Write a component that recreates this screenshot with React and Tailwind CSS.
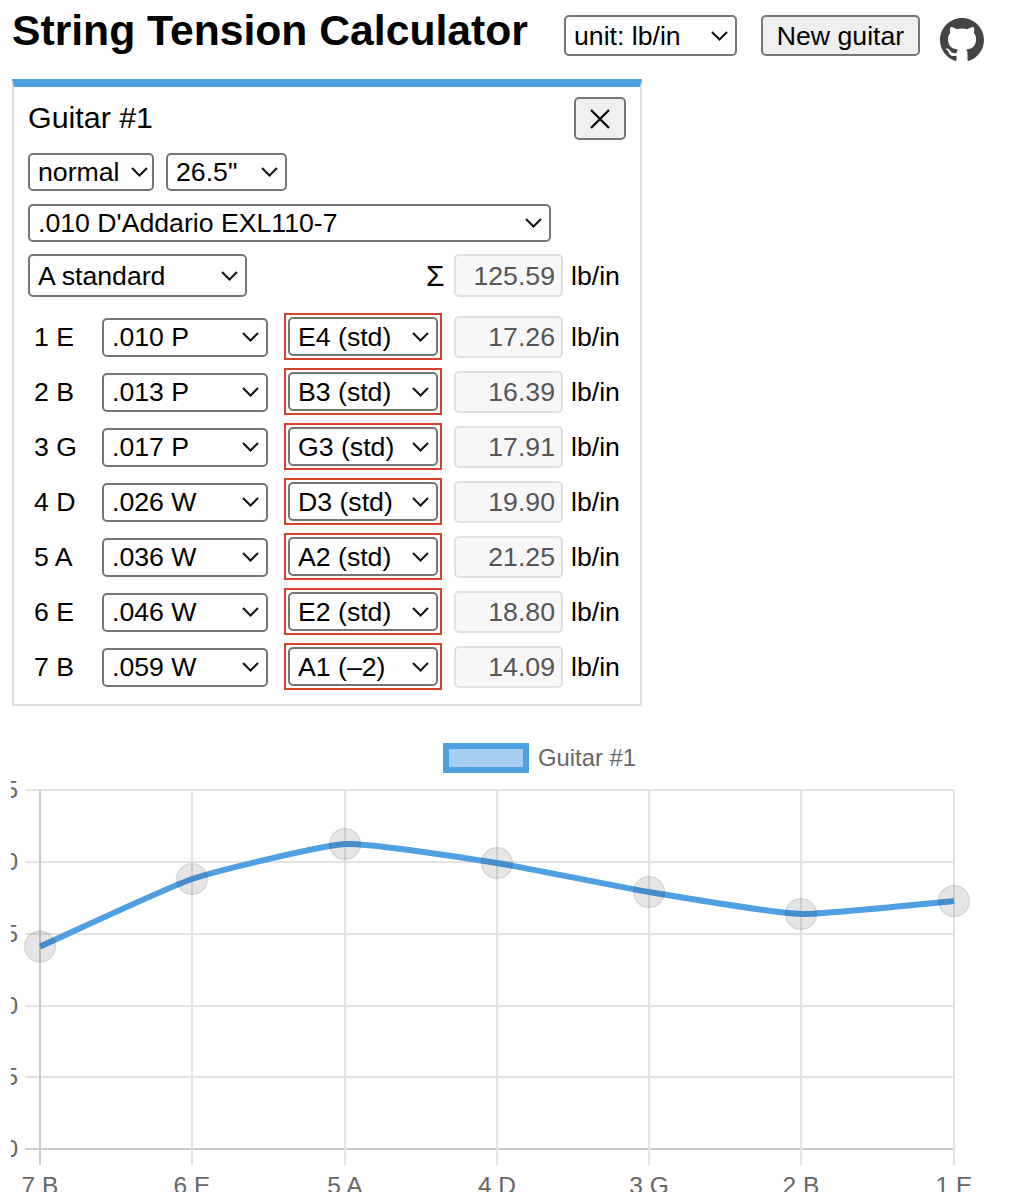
import React from "react";

const font = { fontFamily: '"Liberation Sans", Arial, sans-serif' };

function Select({ value, className, chevron = "right-[9px]", shift = false }) {
  return (
    <div className={`relative ${className}`}>
      <select
        defaultValue={value}
        className={`w-full h-full appearance-none bg-white border-2 border-[#767676] rounded-[5px] pl-[8px] pr-8 text-[26.67px] leading-none text-black outline-none ${shift ? "pt-[2px]" : ""}`}
      >
        <option>{value}</option>
      </select>
      <svg className={`absolute top-1/2 -translate-y-1/2 pointer-events-none ${chevron}`} width="17" height="10" viewBox="0 0 17 10" fill="none" stroke="#111" strokeWidth="2">
        <path d="M1 1l7.5 7.5L16 1" />
      </svg>
    </div>
  );
}

function Output({ value, className = "h-[42px]" }) {
  return (
    <div className={`w-[109px] ${className} border-2 border-[#e0e0e0] rounded-[5px] bg-[#f7f7f7] text-[#555555] text-[26.67px] flex items-center justify-end pr-[6px]`}>
      {value}
    </div>
  );
}

const rows = [
  ["1 E", ".010 P", "E4 (std)", "17.26"],
  ["2 B", ".013 P", "B3 (std)", "16.39"],
  ["3 G", ".017 P", "G3 (std)", "17.91"],
  ["4 D", ".026 W", "D3 (std)", "19.90"],
  ["5 A", ".036 W", "A2 (std)", "21.25"],
  ["6 E", ".046 W", "E2 (std)", "18.80"],
  ["7 B", ".059 W", "A1 (–2)", "14.09"],
];

function curve(pts, t) {
  const ctrl = pts.map((p, i) => {
    const a = pts[Math.max(i - 1, 0)];
    const b = pts[Math.min(i + 1, pts.length - 1)];
    const d1 = Math.hypot(p[0] - a[0], p[1] - a[1]);
    const d2 = Math.hypot(b[0] - p[0], b[1] - p[1]);
    const s = d1 + d2 || 1;
    return {
      prev: [p[0] - (t * d1 * (b[0] - a[0])) / s, p[1] - (t * d1 * (b[1] - a[1])) / s],
      next: [p[0] + (t * d2 * (b[0] - a[0])) / s, p[1] + (t * d2 * (b[1] - a[1])) / s],
    };
  });
  let d = `M${pts[0][0]} ${pts[0][1]}`;
  for (let i = 1; i < pts.length; i++) {
    const c1 = ctrl[i - 1].next;
    const c2 = ctrl[i].prev;
    d += `C${c1[0]} ${c1[1]} ${c2[0]} ${c2[1]} ${pts[i][0]} ${pts[i][1]}`;
  }
  return d;
}

function Chart() {
  const xs = [40, 192, 345, 497, 649, 801, 954];
  const hs = [790, 862, 934, 1006, 1077, 1149];
  const labels = ["7 B", "6 E", "5 A", "4 D", "3 G", "2 B", "1 E"];
  const ticks = ["25", "20", "15", "10", "5", "0"];
  const ys = [216.5, 149, 114, 133, 162, 184, 171];
  const top = 730;
  const rel = (y) => y - top;
  const pts = xs.map((x, i) => [x, ys[i]]);
  return (
    <svg width="1016" height="462" viewBox="0 0 1016 462" className="block" style={{ fontFamily: '"Liberation Sans", Arial, sans-serif' }}>
      <defs>
        <clipPath id="c"><rect x="11" y="0" width="1005" height="462" /></clipPath>
      </defs>
      <rect x="446" y="16" width="80" height="24" fill="#a7cdf1" stroke="#4f9fe3" strokeWidth="6" />
      <text x="538" y="36" fontSize="23.8" fill="#666">Guitar #1</text>
      {hs.map((y, i) => (
        <line key={y} x1="25" x2="954" y1={rel(y)} y2={rel(y)} stroke={i === 5 ? "#cccccc" : "#e3e3e3"} strokeWidth="2" />
      ))}
      {xs.map((x, i) => (
        <line key={x} x1={x} x2={x} y1={rel(790)} y2={rel(1165)} stroke={i === 0 ? "#cccccc" : "#e3e3e3"} strokeWidth="2" />
      ))}
      <g clipPath="url(#c)">
        {ticks.map((t, i) => (
          <text key={t} x="18" y={rel(hs[i]) + 8} textAnchor="end" fontSize="24" fill="#666">{t}</text>
        ))}
      </g>
      {labels.map((l, i) => (
        <text key={l} x={xs[i]} y="464" textAnchor="middle" fontSize="24.5" fill="#666">{l}</text>
      ))}
      <path d={curve(pts, 0.15)} fill="none" stroke="#4f9fe3" strokeWidth="6" />
      {pts.map(([x, y]) => (
        <circle key={x} cx={x} cy={y} r="15.5" fill="rgba(0,0,0,0.1)" stroke="rgba(0,0,0,0.1)" strokeWidth="1.5" />
      ))}
    </svg>
  );
}

export default function App() {
  return (
    <div style={font} className="w-[1016px] h-[1192px] overflow-hidden bg-white text-black relative">
      <header className="flex items-start h-[79px] pl-[12px]">
        <h1 className="text-[42.67px] font-bold leading-none mt-[9px] w-[552px] whitespace-nowrap">String Tension Calculator</h1>
        <Select value="unit: lb/in" className="w-[173px] h-[41px] mt-[15px]" shift />
        <button className="ml-[24px] mt-[15px] w-[159px] h-[41px] pt-[2px] bg-[#efefef] border-2 border-[#767676] rounded-[5px] text-[26.67px] leading-none">New guitar</button>
        <svg className="ml-[20px] mt-[18px]" width="44" height="44" viewBox="0 0 16 16" fill="#444">
          <path d="M8 0C3.58 0 0 3.58 0 8c0 3.54 2.29 6.53 5.47 7.59.4.07.55-.17.55-.38 0-.19-.01-.82-.01-1.49-2.01.37-2.53-.49-2.69-.94-.09-.23-.48-.94-.82-1.13-.28-.15-.68-.52-.01-.53.63-.01 1.08.58 1.23.82.72 1.21 1.87.87 2.33.66.07-.52.28-.87.51-1.07-1.78-.2-3.64-.89-3.64-3.95 0-.87.31-1.59.82-2.15-.08-.2-.36-1.02.08-2.12 0 0 .67-.21 2.2.82.64-.18 1.32-.27 2-.27.68 0 1.36.09 2 .27 1.53-1.04 2.2-.82 2.2-.82.44 1.1.16 1.92.08 2.12.51.56.82 1.27.82 2.15 0 3.07-1.87 3.75-3.65 3.95.29.25.54.73.54 1.48 0 1.07-.01 1.93-.01 2.2 0 .21.15.46.55.38A8.013 8.013 0 0016 8c0-4.42-3.58-8-8-8z" />
        </svg>
      </header>

      <section className="ml-[12px] w-[630px] h-[627px] border-2 border-t-[8px] border-[#dddddd] border-t-[#4f9fe3] pl-[14px]">
        <div className="flex items-start justify-between pr-[14px] h-[66px]">
          <div className="text-[30.4px] leading-none mt-[15px]">Guitar #1</div>
          <button className="w-[52px] h-[43px] mt-[10px] bg-[#efefef] border-2 border-[#767676] rounded-[5px] flex items-center justify-center">
            <svg width="20" height="20" viewBox="0 0 20 20" stroke="#111" strokeWidth="2.4" fill="none"><path d="M1 1l18 18M19 1L1 19" /></svg>
          </button>
        </div>
        <div className="flex gap-[12px] h-[38px]">
          <Select value="normal" className="w-[126px] h-[38px]" chevron="right-[6px]" />
          <Select value={'26.5"'} className="w-[121px] h-[38px]" />
        </div>
        <Select value=".010 D'Addario EXL110-7" className="w-[523px] h-[38px] mt-[13px]" />
        <div className="flex items-center h-[43px] mt-[12px]">
          <Select value="A standard" className="w-[219px] h-[43px]" shift />
          <span className="ml-[179px] w-[28px] text-[30px] leading-none">Σ</span>
          <Output value="125.59" className="h-[43px]" />
          <span className="ml-[8px] text-[26.67px]">lb/in</span>
        </div>
        <div className="flex flex-col gap-[8px] mt-[16px]">
          {rows.map(([name, gauge, note, val]) => (
            <div key={name} className="flex items-center h-[47px]">
              <span className="w-[74px] pl-[6px] text-[26.67px]">{name}</span>
              <Select value={gauge} className="w-[166px] h-[39px] mt-[1px]" />
              <div className="ml-[16px] w-[158px] h-[47px] border-2 border-[#d8412a] p-[2px]">
                <Select value={note} className="w-full h-full" shift />
              </div>
              <Output value={val} className="ml-[12px] h-[42px]" />
              <span className="ml-[8px] text-[26.67px]">lb/in</span>
            </div>
          ))}
        </div>
      </section>

      <div className="mt-[24px]"><Chart /></div>
    </div>
  );
}
